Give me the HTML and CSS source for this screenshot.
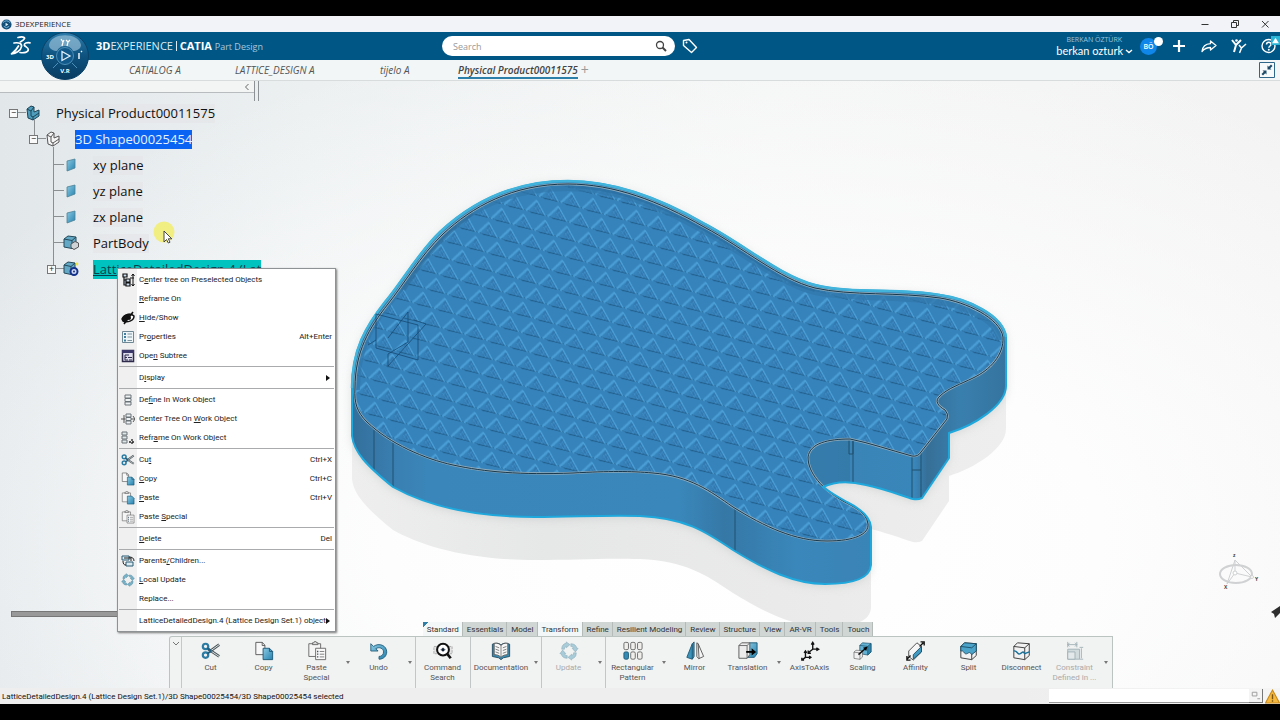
FILE: index.html
```html
<!DOCTYPE html>
<html lang="en">
<head>
<meta charset="utf-8">
<title>3DEXPERIENCE</title>
<link rel="stylesheet" href="styles.css">
</head>
<body>
<svg class="defs" aria-hidden="true">
  <defs>
    <linearGradient id="gBlue" x1="0" y1="0" x2="1" y2="1"><stop offset="0" stop-color="#8cc9e2"/><stop offset="1" stop-color="#2483b0"/></linearGradient>
    <symbol id="i-cut" viewBox="0 0 22 22"><path d="M20 4 9 12M20 17 8 9" stroke="#4b5559" stroke-width="3" fill="none"/><path d="M20 4 9 12M20 17 8 9" stroke="#e9eff1" stroke-width="1" fill="none"/><circle cx="5" cy="6" r="3" fill="none" stroke="#2b7ba3" stroke-width="2.4"/><circle cx="5" cy="15.500" r="3" fill="none" stroke="#2b7ba3" stroke-width="2.4"/><path d="m7 8 4 3-4 3" fill="none" stroke="#1e5e80" stroke-width="2"/></symbol>
    <symbol id="i-copy" viewBox="0 0 22 22"><path d="M2 1.500h7l3 3V15H2z" fill="#f8f8f8" stroke="#555"/><path d="M9 1.500V5h3" fill="none" stroke="#555"/><path d="M10 8h7l3.500 3.500V20.500H10z" fill="url(#gBlue)" stroke="#1b5876"/><path d="M17 8v3.500h3.500" fill="none" stroke="#1b5876"/></symbol>
    <symbol id="i-paste" viewBox="0 0 22 22"><path d="M2 3h13v14H2z" fill="#f5f5f5" stroke="#666"/><path d="M6 4V2h1.500a1.500 1.500 0 0 1 3 0H12v2z" fill="#ddd" stroke="#666"/><path d="M10 8h7l3.500 3.500V20.500H10z" fill="url(#gBlue)" stroke="#1b5876"/></symbol>
    <symbol id="i-special" viewBox="0 0 22 22"><path d="M2 3h13v14H2z" fill="#f5f5f5" stroke="#666"/><path d="M6 4V2h1.500a1.500 1.500 0 0 1 3 0H12v2z" fill="#ddd" stroke="#666"/><path d="M9.500 8h11v12.500h-11z" fill="#fafafa" stroke="#666"/><path d="M14 11.500h5M14 14.500h5M14 17.500h5" stroke="#777"/><path d="M11 11.500h1.500M11 14.500h1.500M11 17.500h1.500" stroke="#3a5060" stroke-width="1.500"/></symbol>
    <symbol id="i-undo" viewBox="0 0 22 22"><path d="M2 3v8h8L7.500 8.500C11 6 16 8 16 12c0 3-2 5-5 5v3c5 0 8.500-3.500 8.500-8C19.500 5 11 1.500 5 6z" fill="url(#gBlue)" stroke="#235f7d"/></symbol>
    <symbol id="i-search" viewBox="0 0 22 22"><path d="M1 6h20v8H1z" fill="#e4e4e4" stroke="#aaa" stroke-dasharray="3 1"/><circle cx="11" cy="9.500" r="6.500" fill="#fff" stroke="#111" stroke-width="2.200"/><path d="M8 9.500h6M11 7v5" stroke="#99a" stroke-width="1"/><circle cx="11" cy="9.500" r="1.800" fill="#123"/><path d="m15.500 14 4 5" stroke="#111" stroke-width="3"/></symbol>
    <symbol id="i-doc" viewBox="0 0 22 22"><path d="M1.500 3.500C5 2 9 2 11 4.500 13 2 17 2 20.500 3.500V17l-7 1.500L11 20.500 8.500 18.500l-7-1.500z" fill="#3a8db4" stroke="#234b60"/><path d="M3.500 2.500C7 2 9.500 3 11 5c1.500-2 4-3 7.500-2.500V15c-3 0-6 1-7.500 3-1.500-2-4.500-3-7.500-3z" fill="#f7f7f7" stroke="#555"/><path d="M11 5v13M5 6l4 1.500M5 9l4 1.500M5 12l4 1.500M17 6l-4 1.500M17 9l-4 1.500M17 12l-4 1.500" stroke="#777" fill="none"/></symbol>
    <symbol id="i-update" viewBox="0 0 22 22"><g fill="#79b3c9" stroke="#4f8599" stroke-width=".7"><path id="u1" d="M3 9C3 5 5 3 8 2.500V1l4 3-4 3.500V6C6.500 6.500 6 7.500 6 9z"/><use href="#u1" transform="rotate(90 11 11)"/><use href="#u1" transform="rotate(180 11 11)"/><use href="#u1" transform="rotate(270 11 11)"/></g></symbol>
    <symbol id="i-pattern" viewBox="0 0 22 22"><g fill="#f0efeb" stroke="#666"><rect x="1" y="1.500" width="5" height="8" rx="1.500"/><rect x="8.500" y="1.500" width="5" height="8" rx="1.500"/><rect x="16" y="1.500" width="5" height="8" rx="1.500"/><rect x="8.500" y="12" width="5" height="8" rx="1.500"/><rect x="16" y="12" width="5" height="8" rx="1.500"/><rect x="1" y="12" width="5" height="8" rx="1.500" fill="#348bb5" stroke="#1d5876"/></g></symbol>
    <symbol id="i-mirror" viewBox="0 0 22 22"><path d="m2 18 6-15 2-2v16l-2 3z" fill="#3b93ba" stroke="#1d5876"/><path d="M8 3v17" stroke="#1d5876"/><path d="m20.500 17-6-14L13 2v15l2 2.500z" fill="#f6f6f6" stroke="#555"/><path d="m14.500 3 1 16.500" stroke="#555"/></symbol>
    <symbol id="i-trans" viewBox="0 0 22 22"><path d="M10 5l3-3h8v12l-3 4h-8z" fill="url(#gBlue)" stroke="#1d5876"/><path d="m1 5 3-3h9v13l-3 4H1z" fill="#ececec" stroke="#555"/><path d="M1 5h9l3-3M10 5v14" fill="none" stroke="#666"/><path d="M9 12h8" stroke="#000" stroke-width="2"/><path d="m15 8 5 4-5 4z"/></symbol>
    <symbol id="i-axis" viewBox="0 0 22 22"><g fill="none" stroke="#111" stroke-width="1.500"><path d="M6 11v7h6M6 18l-4 3M4.500 13 6 11l1.500 2M10 16.500l2 1.500-2 1.500M2 18.500V21h2.500"/><path d="M14 2v7h6M14 9 9 13M12.500 4 14 1.500 15.500 4M18 7.500 20.500 9 18 10.500M9 10.500V13.500h3"/></g></symbol>
    <symbol id="i-cubew" viewBox="0 0 22 22"><path d="m2 6 4-4 13 1v13l-5 4.500-12-2z" fill="#f2f2f2" stroke="#333"/><path d="m2 6 12 1.500 5-4.500M14 7.500v13" fill="none" stroke="#333"/></symbol>
    <symbol id="i-cubeb" viewBox="0 0 22 22"><path d="m2 6 4-4 13 1v13l-5 4.500-12-2z" fill="#63b1d3" stroke="#1a4d66"/><path d="m14 7.500 5-4.500v13l-5 4.500z" fill="#2e86af" stroke="#1a4d66"/><path d="m2 6 12 1.500" fill="none" stroke="#1a4d66"/></symbol>
    <symbol id="i-scale" viewBox="0 0 22 22"><use href="#i-cubeb" x="6" width="16" height="17"/><use href="#i-cubew" x="0" y="9" width="12" height="12"/><path d="m6 15 8-7" stroke="#111" stroke-width="1.600"/><path d="m16 6-1.500 5-3.500-3.500z"/></symbol>
    <symbol id="i-affinity" viewBox="0 0 22 22"><path d="m3 11 9-9 5 4v6l-9 9-5-4z" fill="#f6f6f6" stroke="#444"/><path d="m8 15 9-9v6l-9 8z" fill="#3f99c0" stroke="#1a4d66"/><path d="m15 6 4-4M5 16l-4 4M16 1h4v4M1 16.500V21h4" fill="none" stroke="#111" stroke-width="1.500"/></symbol>
    <symbol id="i-split" viewBox="0 0 22 22"><use href="#i-cubew" width="22" height="22"/><path d="m2 6 4-4 13 1v8l-5 4c-3-5-4 0-7-1-2-1-2-4-5-3z" fill="#4ba3c9" stroke="#1a4d66"/><path d="m2 6 12 1.500 5-4.500" fill="none" stroke="#1a4d66"/></symbol>
    <symbol id="i-disc" viewBox="0 0 22 22"><use href="#i-cubew" width="22" height="22"/><path d="M2 11c4-1 4 5 7 3s3-3 5 0l5-2" fill="none" stroke="#1a7199" stroke-width="1.500"/></symbol>
    <symbol id="i-constraint" viewBox="0 0 22 22"><g stroke="#6a868e" fill="#bdcdd2"><path d="M3 9h13v11H3z"/><path d="M3 12h8v8H3z" fill="#dbe3e5"/><path d="M3 1v6M13 1v6M3 4h10M16 7h4M16 20h4M18 8v11M5 2 3 4l2 2M11 2l2 2-2 2" fill="none"/></g></symbol>
    <symbol id="i-body" viewBox="0 0 16 16"><path d="m1 4 4-3 8 1v8l-4 3.500L1 12z" fill="#63a9c6" stroke="#24495a"/><path d="m1 4 8 1.500L13 2M9 5.500v8" fill="none" stroke="#24495a"/><path d="m8 9 4-2.500 3.500 1.500v4L11 14.500 8 12.500z" fill="#cfd3d5" stroke="#555"/></symbol>
    <symbol id="i-lattice" viewBox="0 0 16 16"><path d="m1 4 4-3 7 1v8l-4 3.500L1 12z" fill="#63a9c6" stroke="#24495a"/><path d="m1 4 7 1.500L12 2M8 5.500v8" fill="none" stroke="#24495a"/><circle cx="11" cy="10.500" r="3.500" fill="#cfd9f4" stroke="#16338c" stroke-width="2"/><circle cx="11" cy="10.500" r="1" fill="#16338c"/><path d="m12.500 3 1.500-2 1.500 2L14 5z" fill="#f0e63c"/></symbol>
    <symbol id="i-plane" viewBox="0 0 16 16"><path d="m4 4 8-2v9l-8 3z" fill="url(#gBlue)" stroke="#4b8198" stroke-width=".8"/></symbol>
    <symbol id="i-product" viewBox="0 0 16 16"><path d="m2 4 4-3 3 1v5l5-2v6l-6 4-5-2z" fill="#4f9dbd" stroke="#1c4456"/><path d="m2 4 4 2 3-4M6 6v5l2 1 6-4M8 12v3" fill="none" stroke="#1c4456"/></symbol>
    <symbol id="i-shape" viewBox="0 0 16 16"><path d="m2 4 4-3 3 1v5l5-2v6l-6 4-5-2z" fill="#f5f5f5" stroke="#555"/><path d="m2 4 4 2 3-4M6 6v5l2 1 6-4M8 12v3" fill="none" stroke="#555"/></symbol>
    <symbol id="m-tree" viewBox="0 0 14 14"><path d="M2 1h4v3H2zM5 6h4v3H5zM5 10h4v3H5zM3 4v8h2M3 7h2" fill="#cde" stroke="#111" stroke-width="1.200"/><path d="M12 1v12M10.500 3 12 1l1.500 2M10.500 11l1.500 2 1.500-2M9 5h4" stroke="#111" fill="none"/></symbol>
    <symbol id="m-hide" viewBox="0 0 14 14"><path d="M1 8C3 3 10 2 13 5c0 5-7 7-11 5z" fill="#fff" stroke="#111" stroke-width="1.500"/><path d="M1 9C2 4 6 2 10 3L4 12z" fill="#111"/><circle cx="8" cy="7" r="2" fill="#111"/><path d="M12 1 3 13" stroke="#111" stroke-width="1.500"/></symbol>
    <symbol id="m-props" viewBox="0 0 14 14"><path d="M1.500 1.500h11v11h-11z" fill="#eef5f8" stroke="#6d8794"/><path d="M3 3h2v2H3zM3 6h2v2H3zM3 9.500h2v2H3z" fill="#3f7f9f"/><path d="M6.500 4H11M6.500 7H11M6.500 10.500H11" stroke="#7c929d"/></symbol>
    <symbol id="m-sub" viewBox="0 0 14 14"><path d="M1.500 1.500h11v11h-11z" fill="#dcdcea" stroke="#2d2a4c" stroke-width="1.500"/><path d="M1 1h12v3H1z" fill="#3b3768"/><path d="M4 6h4M4 8.500h2M7 8.500h4M4 6v5h3M8 11h3" fill="none" stroke="#2d2a4c"/></symbol>
    <symbol id="m-def" viewBox="0 0 14 14"><path d="M4 2h6v3H4zM4 9h6v3H4zM4 5.500h6v3H4z" fill="#eef2f3" stroke="#6a7378"/></symbol>
    <symbol id="m-center" viewBox="0 0 14 14"><path d="M5 2h5v3H5zM5 9h5v3H5zM5 5.500h5v3H5z" fill="#eef2f3" stroke="#6a7378"/><path d="M0 7h4M10 7h4M3 3v8M12 4l2 3-2 3" fill="none" stroke="#555"/></symbol>
    <symbol id="m-reframe" viewBox="0 0 14 14"><path d="M1 1h5v3H1zM1 5h5v3H1zM1 9h5v3H1z" fill="#dfe7e9" stroke="#6a7378"/><path d="M8 11h6M11 8v6" stroke="#222" stroke-width="1.300" stroke-dasharray="2 1"/></symbol>
    <symbol id="m-parents" viewBox="0 0 14 14"><path d="M1 2h7v4H1zM5 8h7v4H5z" fill="#dcebf2" stroke="#2b5a70"/><path d="M8 3c3 0 5 1 5 4M2 7c0 3 1 4 3 4M3 4h7v3" fill="none" stroke="#222"/></symbol>
    <pattern id="lattice" width="20" height="20" patternUnits="userSpaceOnUse" patternTransform="matrix(1.085 .3 .43 1 386 210)">
      <rect width="20" height="20" fill="#3682ba"/>
      <g id="latticeCell" fill="none">
        <path d="M2 2 4 17-6 14z" fill="#2b6c9f" opacity=".5"/>
        <path d="M-10 17 9 16" stroke="#22608d" stroke-width="1.300"/>
        <path d="M-5 14 1 7M-2 16l4-5M0 8l1 8M-3 10l1 6" stroke="#3f8fc8" stroke-width=".8"/>
        <path d="M-14 17 2 2 4 17" stroke="#4a9fd7" stroke-width="1.600" stroke-linejoin="round"/>
      </g>
      <use href="#latticeCell" x="20"/>
    </pattern>
    <linearGradient id="wall" gradientUnits="userSpaceOnUse" x1="352" x2="1006" y1="0" y2="0">
      <stop offset="0" stop-color="#336f9c"/><stop offset=".07" stop-color="#3a80b2"/><stop offset=".12" stop-color="#3a86ba"/><stop offset=".5" stop-color="#3a87bb"/><stop offset=".57" stop-color="#3578a6"/><stop offset=".68" stop-color="#3a87bb"/><stop offset=".76" stop-color="#3a84b7"/><stop offset=".86" stop-color="#3986ba"/><stop offset=".88" stop-color="#366f97"/><stop offset=".93" stop-color="#397fae"/><stop offset="1" stop-color="#35749f"/>
    </linearGradient>
    <linearGradient id="mirrorFade" gradientUnits="userSpaceOnUse" x1="352" x2="1006" y1="0" y2="0"><stop offset="0" stop-color="#eeeeee"/><stop offset=".3" stop-color="#e6e7e7"/><stop offset=".65" stop-color="#eaeaea"/><stop offset="1" stop-color="#eeeeee"/></linearGradient>
    <path id="silhouette" d="M568 181C510 181 470 204 440 232 418 253 402 282 385 302 366 326 352 350 352 388V436C354 452 366 465 393 487 420 502 465 517 535 517 575 517 600 515 640 516 685 518 705 531 733 550 765 570 795 584 825 584 855 584 870 578 871 565V527C870 514 855 506 847 502 838 497 828 491 823 487 835 481 850 481 866 485 885 489 900 495 913 499Q918 500 922 498L949 458V433C975 425 1006 405 1006 386V337C1003 315 968 299 940 295 900 288 850 294 815 285 780 276 745 245 705 224 660 198 615 181 568 181Z"/>
    <path id="face" d="M568 184C512 184 472 207 443 234 420 256 404 284 388 304 369 328 355 352 355 388 354 403 357 412 367 422 390 444 425 459 453 465 485 472 520 475 573 473 610 471 630 471 653 473 690 476 710 491 733 507 765 527 795 541 827 541 855 541 869 534 868 524 867 512 852 506 843 501 822 489 808 473 808 457 810 443 828 439 850 439 870 443 890 450 912 456Q918 457 921 452L947 419Q949 414 945 410C938 406 934 401 940 396 948 388 961 384 973 378 990 370 1004 355 1003 337 1000 318 966 302 940 298 900 292 850 296 815 288 779 279 744 248 704 227 659 201 614 184 568 184Z"/>
    <clipPath id="faceClip"><use href="#face"/></clipPath>
    <filter id="soft" x="-10%" y="-10%" width="120%" height="130%"><feGaussianBlur stdDeviation="5"/></filter>
  </defs>
</svg>

<div class="app">
  <header class="titlebar">
    <svg class="globe" viewBox="0 0 12 12" aria-hidden="true"><circle cx="6" cy="6" r="5.500" fill="#124d78"/><path d="M2 4q4-4 8 0M3 8q3 3 6 0" stroke="#7fc0e6" fill="none"/><path d="m5 4 3 2-3 2z" fill="#d9effb"/></svg>
    <span class="titlebar-name">3DEXPERIENCE</span>
    <button class="win" aria-label="Minimize"><svg viewBox="0 0 10 10"><path d="M1.500 5.500h7"/></svg></button>
    <button class="win" aria-label="Restore"><svg viewBox="0 0 10 10"><path d="M1.500 3.500h5v5h-5zM3.500 3V1.500h5v5H7"/></svg></button>
    <button class="win" aria-label="Close"><svg viewBox="0 0 10 10"><path d="m2 2 6.500 6.500M8.500 2 2 8.500"/></svg></button>
  </header>

  <div class="topbar">
    <svg class="ds" viewBox="0 0 22 20" aria-label="DS"><g fill="none" stroke="#fff" stroke-width="1.700" stroke-linecap="round" stroke-linejoin="round"><path d="M9 1.500c4-1 7-.5 6.500 1C15 4 13 5 11.500 5.800"/><path d="M5 7c5-.8 8 .5 7.500 3.500C12 14.500 7 17.500 2.500 18 5.500 15.500 8 13 9.500 10"/><path d="M21 6.800c-3-.4-6 .2-5.700 2.200.3 1.800 4 2.200 4 4.500 0 2.800-4.500 3.700-8.300 3"/></g></svg>
    <button class="compass" aria-label="Compass"><svg viewBox="0 0 48 48"><defs><linearGradient id="cg" x1="0" x2="0" y1="0" y2="1"><stop offset="0" stop-color="#2d7cab"/><stop offset=".5" stop-color="#0e527f"/><stop offset="1" stop-color="#083c62"/></linearGradient></defs><circle cx="24" cy="24" r="23.500" fill="url(#cg)" stroke="#0b4268"/><path d="M8 13C10 0 38 0 40 13c0 4-5 6-8 6a9 9 0 0 0-16 0c-3 0-8-2-8-6z" fill="#9fc4dc" opacity=".65"/><circle cx="24" cy="24" r="8.500" fill="#11598a" stroke="#4c8fb8"/><path d="m21 19.500 8 4.500-8 4.500z" fill="none" stroke="#e3f2fb" stroke-width="1.300"/><path d="m12 36 5-5M36 36l-5-5" stroke="#4c8fb8"/><path d="m20 7 2 3-1 4M23 8l-1 2M25 8l2 2-1 4M29 8l-2 2" stroke="#fff" fill="none" stroke-width="1.200"/><path d="M38 21v6M40 20l1-1" stroke="#fff" stroke-width="1.400"/><text x="9" y="27" text-anchor="middle">3D</text><text x="24" y="41" text-anchor="middle">V.R</text></svg></button>
    <p class="brand"><b>3D</b>EXPERIENCE <i></i> <b>CATIA</b> <span>Part Design</span></p>
    <form class="search"><input type="search" aria-label="Search" placeholder="Search"><button type="button" aria-label="Go"><svg viewBox="0 0 12 12"><circle cx="5" cy="5" r="3.500" fill="none" stroke="#444" stroke-width="1.300"/><path d="m7.500 7.500 3.500 3.500" stroke="#444" stroke-width="2"/></svg></button></form>
    <button class="ico tag" aria-label="Tags"><svg viewBox="0 0 16 16"><path d="M1.500 2.500 7 1.500l7.500 8-5 5-8-7z" fill="none" stroke="#fff" stroke-width="1.400" stroke-linejoin="round"/><circle cx="4.500" cy="4.500" r="1" fill="#fff"/></svg></button>
    <div class="user"><small>BERKAN ÖZTÜRK</small><button>berkan ozturk<svg viewBox="0 0 8 5"><path d="m1 1 3 2.500L7 1" fill="none" stroke="#fff" stroke-width="1.400"/></svg></button></div>
    <div class="avatar">BÖ<span></span></div>
    <div class="actions">
      <button class="ico" aria-label="Add"><svg viewBox="0 0 16 16"><path d="M8 2v12M2 8h12" stroke="#fff" stroke-width="2.200"/></svg></button>
      <button class="ico" aria-label="Share"><svg viewBox="0 0 16 16"><path d="M9.500 3 15 7.500l-5.500 4.500V9.500C6 9.500 3.500 10.500 1 13.500 1.500 9 4.500 6 9.500 5.700z" fill="none" stroke="#fff" stroke-width="1.300" stroke-linejoin="round"/></svg></button>
      <button class="ico" aria-label="Communities"><svg viewBox="0 0 16 16"><g stroke="#fff" fill="none" stroke-width="2"><path d="m1 2 4 5 5-5M5 7l-2 7"/><path d="m8 7 2.500 3L15 6M10.500 10 8.500 15" stroke-width="1.500"/></g><circle cx="5.500" cy="2.500" r="1.300" fill="#fff"/></svg></button>
      <button class="ico help" aria-label="Help"><svg viewBox="0 0 16 16"><circle cx="7.500" cy="8" r="6.500" fill="none" stroke="#fff" stroke-width="1.400"/><path d="M5.500 6.500c0-3 4.500-3 4.500 0C10 8 7.800 8 7.800 9.800" stroke="#fff" stroke-width="1.500" fill="none"/><circle cx="7.800" cy="11.800" r="1" fill="#fff"/></svg><span><svg viewBox="0 0 8 8"><path d="m4 1.500 3 5H1z" fill="#fff"/></svg></span></button>
    </div>
  </div>

  <nav class="tabs">
    <a href="#" class="t1">CATIALOG A</a><a href="#" class="t2">LATTICE_DESIGN A</a><a href="#" class="t3">tijelo A</a><a href="#" class="active">Physical Product00011575</a>
    <button class="plus" aria-label="New tab">+</button>
    <button class="collapse" aria-label="Collapse"><svg viewBox="0 0 16 16"><path d="M.5.500h15v15H.5z" fill="#f7fafb" stroke="#2f678a"/><path d="M8.500 7.500V3.500l1.300 1.300L12 2.500 13.500 4l-2.300 2.200 1.300 1.300zM7.500 8.500v4l-1.300-1.300L4 13.500 2.500 12l2.300-2.200L3.500 8.500z" fill="#1c4a68"/></svg></button>
  </nav>

  <main class="stage">
    <svg class="scene" viewBox="0 81 1280 607" preserveAspectRatio="xMidYMid slice" aria-label="Guitar body model">
      <use href="#silhouette" y="43" fill="url(#mirrorFade)"/>
      <use href="#silhouette" y="2" fill="#b9bcbe" opacity=".5" filter="url(#soft)"/>
      <use href="#silhouette" fill="url(#wall)"/>
      <path d="M808 457C810 443 828 439 850 439V482C840 482 832 484 823 487 812 478 808 468 808 457Z" fill="#2f6a93" opacity=".35"/>
      <g fill="none" stroke="#20506f" stroke-width="1"><path d="M374 430v40M393 443v44M735 508v43M853 440v42M849 440v14h4v-14M912 456v42M921 452v46M912 470h9"/></g>
      <use href="#face" fill="url(#lattice)"/>
      <g clip-path="url(#faceClip)">
        <path d="M353 390C353 350 366 326 385 302 402 282 418 253 440 232 470 204 510 184 568 184 615 184 660 201 705 227 745 248 780 279 815 288 850 296 900 291 940 298 968 302 1003 318 1003 340" fill="none" stroke="#3278ac" stroke-width="14" opacity=".75"/>
        <path d="M400 288C418 258 440 232 470 210" fill="none" stroke="#2c658f" stroke-width="12" opacity=".5"/>
        <path d="M568 184C615 184 660 201 705 227 745 248 780 279 815 288" fill="none" stroke="#28699b" stroke-width="8" opacity=".5"/>
      </g>
      <use href="#face" fill="none" stroke="#8fabbc" stroke-width="2.400"/>
      <use href="#face" fill="none" stroke="#17384d" stroke-width="1"/>
      <use href="#silhouette" fill="none" stroke="#1fa8dc" stroke-width="2"/>
      <path d="M352 388C352 350 366 326 385 302 402 282 418 253 440 232 470 204 510 181 568 181 615 181 660 198 705 224 745 245 780 276 815 285 850 294 900 288 940 295 968 299 1003 315 1006 337" fill="none" stroke="#42b3da" stroke-width="2.500"/>
      <g fill="none" stroke="#174a74" stroke-width="1" opacity=".8"><path d="m376 314 42 11v35l-42-12zM388 366l38-42-12-4M388 366v-12l20-12v-30l-20 26M368 345l8-5"/></g>
      <g fill="none" stroke="#cfd1d2" stroke-width="2"><ellipse cx="1236" cy="574" rx="16" ry="9"/><path d="M1235 560v13l17 4M1235 573l-8 11M1235 560l-8 24M1235 560l17 17" stroke-width="1"/><circle cx="1235" cy="573" r="2" fill="#fff" stroke-width="1"/><circle cx="1252" cy="577" r="1.500" fill="#fff" stroke-width="1"/></g>
      <g class="axis"><text x="1233" y="557">z</text><text x="1255" y="581">Y</text><text x="1224" y="589">X</text></g>
      <path d="m1271 612 9-6v7l-5 5-1-4z" fill="#2e2e2e"/>
    </svg>

    <aside class="panel">
      <div class="panel-head"><button aria-label="Collapse panel"><svg viewBox="0 0 6 8"><path d="M4.500 1 1.500 4l3 3" fill="none" stroke="#666"/></svg></button></div>
      <ul class="tree">
        <li><div class="row l0"><button class="exp" aria-label="Collapse">−</button><svg><use href="#i-product"/></svg><span>Physical Product00011575</span></div>
          <ul class="kids1"><li><div class="row l1"><button class="exp" aria-label="Collapse">−</button><svg><use href="#i-shape"/></svg><span class="sel">3D Shape00025454</span></div>
            <ul class="kids2">
              <li class="row l2"><svg><use href="#i-plane"/></svg><span>xy plane</span></li>
              <li class="row l2"><svg><use href="#i-plane"/></svg><span>yz plane</span></li>
              <li class="row l2"><svg><use href="#i-plane"/></svg><span>zx plane</span></li>
              <li class="row l2"><svg><use href="#i-body"/></svg><span>PartBody</span></li>
              <li class="row l2 has"><button class="exp" aria-label="Expand">+</button><svg><use href="#i-lattice"/></svg><span class="work">LatticeDetailedDesign.4 (Lat</span></li>
            </ul></li></ul></li>
      </ul>
      <div class="hscroll"></div>
    </aside>

    <div class="dock">
      <div class="sections">
        <button class="on first">Standard</button><button>Essentials</button><button>Model</button><button class="on">Transform</button><button>Refine</button><button>Resilient Modeling</button><button>Review</button><button>Structure</button><button>View</button><button>AR-VR</button><button>Tools</button><button>Touch</button>
      </div>
      <div class="tools">
        <button class="fold" aria-label="Fold"><svg viewBox="0 0 8 5"><path d="m1 1 3 3 3-3" fill="none" stroke="#777"/></svg></button>
        <div class="group">
          <button class="tool"><svg><use href="#i-cut"/></svg>Cut</button>
          <button class="tool"><svg><use href="#i-copy"/></svg>Copy</button>
          <button class="tool"><svg><use href="#i-special"/></svg>Paste<br>Special</button><button class="drop" aria-label="More paste"></button>
          <button class="tool"><svg><use href="#i-undo"/></svg>Undo</button><button class="drop" aria-label="More undo"></button>
        </div>
        <div class="group"><button class="tool"><svg><use href="#i-search"/></svg>Command<br>Search</button></div>
        <div class="group"><button class="tool wide"><svg><use href="#i-doc"/></svg>Documentation</button><button class="drop" aria-label="More documentation"></button></div>
        <div class="group"><button class="tool off"><svg><use href="#i-update"/></svg>Update</button><button class="drop" aria-label="More update"></button></div>
        <div class="group">
          <button class="tool"><svg><use href="#i-pattern"/></svg>Rectangular<br>Pattern</button><button class="drop" aria-label="More patterns"></button>
          <button class="tool"><svg><use href="#i-mirror"/></svg>Mirror</button>
          <button class="tool"><svg><use href="#i-trans"/></svg>Translation</button><button class="drop" aria-label="More translation"></button>
          <button class="tool"><svg><use href="#i-axis"/></svg>AxisToAxis</button>
          <button class="tool"><svg><use href="#i-scale"/></svg>Scaling</button>
          <button class="tool"><svg><use href="#i-affinity"/></svg>Affinity</button>
          <button class="tool"><svg><use href="#i-split"/></svg>Split</button>
          <button class="tool"><svg><use href="#i-disc"/></svg>Disconnect</button>
          <button class="tool off"><svg><use href="#i-constraint"/></svg>Constraint<br>Defined in ...</button><button class="drop" aria-label="More constraints"></button>
        </div>
      </div>
    </div>

    <svg class="cursor" viewBox="0 0 24 24" aria-hidden="true"><circle cx="11" cy="11" r="10.500" fill="#f3ee5c" opacity=".75"/><path d="M11 10v11l2.500-2.500 1.800 3.500 1.700-.8-1.700-3.400h3.500z" fill="#fff" stroke="#333" stroke-width=".9"/></svg>

    <ul class="menu" role="menu">
      <li><button><svg><use href="#m-tree"/></svg><span>C<u>e</u>nter tree on Preselected Objects</span></button></li>
      <li><button><svg></svg><span><u>R</u>eframe On</span></button></li>
      <li><button><svg><use href="#m-hide"/></svg><span><u>H</u>ide/Show</span></button></li>
      <li><button><svg><use href="#m-props"/></svg><span>Pr<u>o</u>perties</span><kbd>Alt+Enter</kbd></button></li>
      <li><button><svg><use href="#m-sub"/></svg><span>Ope<u>n</u> Subtree</span></button></li>
      <li class="line"><button><svg></svg><span>D<u>i</u>splay</span><em></em></button></li>
      <li class="line"><button><svg><use href="#m-def"/></svg><span>De<u>f</u>ine In Work Object</span></button></li>
      <li><button><svg><use href="#m-center"/></svg><span>Center Tree On <u>W</u>ork Object</span></button></li>
      <li><button><svg><use href="#m-reframe"/></svg><span>Refr<u>a</u>me On Work Object</span></button></li>
      <li class="line"><button><svg><use href="#i-cut"/></svg><span>Cu<u>t</u></span><kbd>Ctrl+X</kbd></button></li>
      <li><button><svg><use href="#i-copy"/></svg><span><u>C</u>opy</span><kbd>Ctrl+C</kbd></button></li>
      <li><button><svg><use href="#i-paste"/></svg><span><u>P</u>aste</span><kbd>Ctrl+V</kbd></button></li>
      <li><button><svg><use href="#i-special"/></svg><span>Paste <u>S</u>pecial</span></button></li>
      <li class="line"><button><svg></svg><span><u>D</u>elete</span><kbd>Del</kbd></button></li>
      <li class="line"><button><svg><use href="#m-parents"/></svg><span>Parents<u>/</u>Children...</span></button></li>
      <li><button><svg><use href="#i-update"/></svg><span><u>L</u>ocal Update</span></button></li>
      <li><button><svg></svg><span>Replace...</span></button></li>
      <li class="line"><button><svg></svg><span>LatticeDetailedDesign.4 (Lattice Design Set.1) object</span><em></em></button></li>
    </ul>
  </main>

  <footer class="status">
    <span>LatticeDetailedDesign.4 (Lattice Design Set.1)/3D Shape00025454/3D Shape00025454 selected</span>
    <input type="text" aria-label="Command input">
    <button aria-label="Command list"><svg viewBox="0 0 14 14"><path d="M3.500 3.500h5v4h-5zM9 10.500h3" fill="none" stroke="#999"/></svg></button>
    <svg class="warn" viewBox="0 0 14 14" aria-label="Warning"><path d="m7 1 6.500 12H.5z" fill="#f6b93d" stroke="#c98a1c"/><path d="M7 5v4.500M7 10.500V12" stroke="#7a5410" stroke-width="1.300"/></svg>
  </footer>
</div>
</body>
</html>
```
FILE: styles.css
```css
* { box-sizing: border-box; }
body {
  margin: 0;
  background: #000;
  font-family: "Open Sans", "Noto Sans", sans-serif;
  color: #222;
}
button, input { font: inherit; color: inherit; border: 0; background: none; padding: 0; margin: 0; }
ul { list-style: none; margin: 0; padding: 0; }
.defs { position: absolute; width: 0; height: 0; }
.app {
  display: grid;
  grid-template-rows: 16px 28px 21px 1fr 16px;
  min-height: 100vh;
  border-top: 16px solid #000;
  border-bottom: 16px solid #000;
  overflow: hidden;
}

.titlebar { display: flex; align-items: center; background: #f2f3f8; padding: 0 10px 0 1px; }
.globe { width: 11px; height: 11px; margin-right: 3px; }
.titlebar-name { font-size: 8px; line-height: 14px; flex: 1; }
.win { width: 10px; height: 12px; margin-left: 20px; display: flex; align-items: center; }
.win svg { width: 10px; height: 10px; fill: none; stroke: #333; }

.topbar { display: flex; align-items: center; background: #005685; color: #fff; padding-left: 9px; }
.ds { width: 22px; height: 20px; flex: none; }
.compass { width: 48px; height: 28px; margin: 0 7px 0 10px; position: relative; z-index: 3; }
.compass svg { position: absolute; left: 0; top: 0; width: 48px; height: 48px; }
.compass text { font-size: 6px; font-weight: 700; fill: #fff; }
.brand { margin: 0; width: 346px; font-size: 11px; line-height: 14px; color: #dceaf3; white-space: nowrap; }
.brand b { color: #fff; font-weight: 700; }
.brand i { display: inline-block; width: 1px; height: 10px; background: #dceaf3; vertical-align: -1px; }
.brand span { font-size: 9px; color: #a9c8dc; }
.search { display: flex; align-items: center; width: 233px; height: 20px; background: #fff; border-radius: 10px; padding: 0 8px 0 11px; }
.search input { flex: 1; min-width: 0; font-size: 9px; outline: 0; color: #444; }
.search input::placeholder { color: #999; }
.search button, .search svg { width: 12px; height: 12px; display: block; }
.ico { width: 16px; height: 16px; position: relative; flex: none; }
.ico > svg { display: block; width: 16px; height: 16px; }
.tag { margin-left: 7px; }
.user { margin-left: auto; display: flex; flex-direction: column; align-items: flex-end; }
.user small { font-size: 7px; line-height: 9px; color: #9cc3da; padding-right: 11px; }
.user button { font-family: Lato, sans-serif; font-size: 11px; line-height: 14px; }
.user svg { width: 8px; height: 5px; margin-left: 2px; vertical-align: 1px; }
.avatar { position: relative; width: 17px; height: 17px; margin: 0 14px 0 7px; border-radius: 50%; background: #0f86ea; font-size: 7px; font-weight: 600; line-height: 17px; text-align: center; }
.avatar span { position: absolute; right: -6px; top: -1px; width: 9px; height: 9px; border-radius: 50%; background: #fff; }
.actions { display: flex; gap: 14px; padding-right: 3px; }
.help span { position: absolute; right: -3px; top: -2px; width: 9px; height: 9px; background: #2bb3d6; }
.help span svg { display: block; }

.tabs { display: flex; align-items: stretch; background: #f2f6f6; border-bottom: 1px solid #d8dcdd; font-size: 10px; font-style: italic; padding: 0 5px 0 129px; color: #555; }
.tabs a { color: inherit; text-decoration: none; line-height: 20px; white-space: nowrap; }
.t1 { width: 106px; }
.t2 { width: 145px; }
.t3 { width: 78px; }
.tabs .active { color: #444; font-weight: 600; border-bottom: 2px solid #2b7fa8; height: 19px; }
.plus { font-size: 14px; font-style: normal; color: #999; line-height: 18px; margin-left: 3px; }
.collapse { margin-left: auto; }
.collapse svg { display: block; width: 16px; height: 16px; }

.stage {
  position: relative;
  display: grid;
  grid-template-columns: 259px 1fr;
  grid-template-rows: 1fr auto;
  background: radial-gradient(ellipse 900px 520px at 58% 75%, #fff 0%, #fdfdfd 40%, rgba(247, 248, 248, 0) 100%), linear-gradient(90deg, #e2e7ea, #ecf0f1 24%, #f4f5f5 60%, #f3f3f3);
}
.scene { position: absolute; inset: 0; width: 100%; height: 100%; }
.axis { font-size: 5px; font-weight: 700; fill: #444; }
.panel { grid-area: 1 / 1 / 3 / 2; position: relative; display: flex; flex-direction: column; }
.panel-head { height: 12px; margin-right: 4px; border: 1px solid #b8bcbe; border-top: 0; border-left: 0; background: #f3f5f5; display: flex; justify-content: flex-end; align-items: center; padding-right: 4px; }
.panel-head svg { display: block; width: 6px; height: 8px; }
.panel::after { content: ""; position: absolute; right: 0; top: 0; width: 3px; height: 20px; border: 1px solid #8d9294; border-width: 0 1px; }
.tree { padding-top: 7px; font-size: 13px; color: #111; }
.row { position: relative; display: flex; align-items: center; height: 26px; }
.row svg { width: 16px; height: 16px; flex: none; margin-right: 15px; position: relative; }
.row span { line-height: 19px; white-space: nowrap; background: rgba(228, 230, 232, .7); }
.exp { width: 9px; height: 9px; flex: none; margin-right: 7px; border: 1px solid #777; background: #fafafa; font-size: 9px; line-height: 6px; color: #222; position: relative; z-index: 1; }
.l0 { padding-left: 9px; }
.l1 { padding-left: 29px; }
.l1 svg { margin-right: 14px; }
.l2 { padding-left: 63px; }
.has { padding-left: 47px; }
.l2 svg { margin-right: 14px; }
.row .sel { background: #0a63f2; color: #e8f2ff; }
.row .work { background: #00c3bf; color: #053f4c; text-decoration: underline; }
.l0::before, .l1::before, .l2::before { content: ""; position: absolute; top: 12px; height: 1px; background: #8b8f91; }
.l0::before { left: 18px; width: 8px; }
.l1::before { left: 38px; width: 8px; }
.l2::before { left: 53px; width: 11px; }
.kids1, .kids2 { position: relative; }
.kids1::before, .kids2::before { content: ""; position: absolute; width: 1px; background: #8b8f91; }
.kids1::before { left: 34px; top: -6px; height: 16px; }
.kids2::before { left: 53px; top: -5px; bottom: 13px; }
.hscroll { margin: auto 4px 71px 11px; height: 6px; background: #999; border: 1px solid #777; }

.dock { grid-area: 2 / 1 / 3 / 3; position: relative; display: flex; flex-direction: column; align-items: center; }
.sections { display: flex; margin-left: 16px; font-family: Roboto, sans-serif; font-size: 8px; }
.sections button { height: 14px; line-height: 13px; padding: 0 3px 0 4px; background: #cfd6d3; border-right: 1px solid #b4bbb8; color: #333; white-space: nowrap; }
.sections .on { background: #f4f7f7; }
.sections .first { background: linear-gradient(135deg, #2f7fa8 4px, #f4f7f7 4px); }
.tools { display: flex; height: 52px; margin-left: 2px; background: #f1f2f2; border: 1px solid #bcc4c2; border-bottom: 0; border-radius: 3px 0 0; color: #555; font-family: Roboto, sans-serif; font-size: 8px; }
.fold { width: 12px; border-right: 1px solid #c4c8c8; display: flex; justify-content: center; padding-top: 4px; margin-right: 2px; }
.fold svg { width: 8px; height: 5px; }
.group { display: flex; border-right: 1px solid #c2c6c6; padding: 0 1px 0 0; }
.group:last-child { border: 0; padding: 0 2px 0 0; }
.tool { width: 53px; display: flex; flex-direction: column; align-items: center; line-height: 10px; padding-top: 4px; white-space: nowrap; text-align: center; justify-content: flex-start; }
.tool svg { display: block; width: 20px; height: 20px; flex: none; margin-bottom: 2px; }
.wide { width: 60px; }
.off { color: #aaa; }
.off svg { opacity: .6; }
.drop { width: 9px; display: flex; justify-content: center; padding-top: 24px; }
.drop::after { content: ""; border: 2px solid transparent; border-top: 3px solid #777; }

.cursor { position: absolute; left: 153px; top: 140px; width: 24px; height: 24px; }
.menu {
  position: absolute; left: 117px; top: 187px; width: 219px; padding: 1px;
  background: linear-gradient(90deg, #f0f0f0 19px, #fff 19px);
  border: 1px solid #8f9294; box-shadow: 1px 1px 2px #777;
  font-family: Roboto, sans-serif; font-size: 8px; color: #222;
}
.menu button { display: flex; align-items: center; width: 100%; height: 19px; padding: 0 2px 0 2px; text-align: left; }
.menu svg { width: 14px; height: 14px; flex: none; margin-right: 4px; }
.menu span { flex: 1; white-space: nowrap; }
.menu u { text-underline-offset: 1px; }
.menu kbd { font-family: inherit; }
.menu em { border: 3px solid transparent; border-left: 4px solid #111; border-right: 0; margin-right: 2px; }
.line::before { content: ""; display: block; height: 1px; margin: 1px 0; background: #a9abac; }

.status { display: flex; align-items: center; background: linear-gradient(90deg, #eeeeef 80%, #f5f5f5); font-family: Roboto, sans-serif; font-size: 8px; padding-left: 2px; white-space: nowrap; color: #111; }
.status span { flex: 1; }
.status input { width: 200px; height: 14px; background: #fff; border-bottom: 1px solid #999; }
.status button { width: 14px; height: 14px; border: 1px solid #777; border-width: 0 1px 1px 0; margin-right: 2px; }
.status svg { display: block; width: 13px; height: 13px; }
.status .warn { width: 15px; height: 15px; }
```
